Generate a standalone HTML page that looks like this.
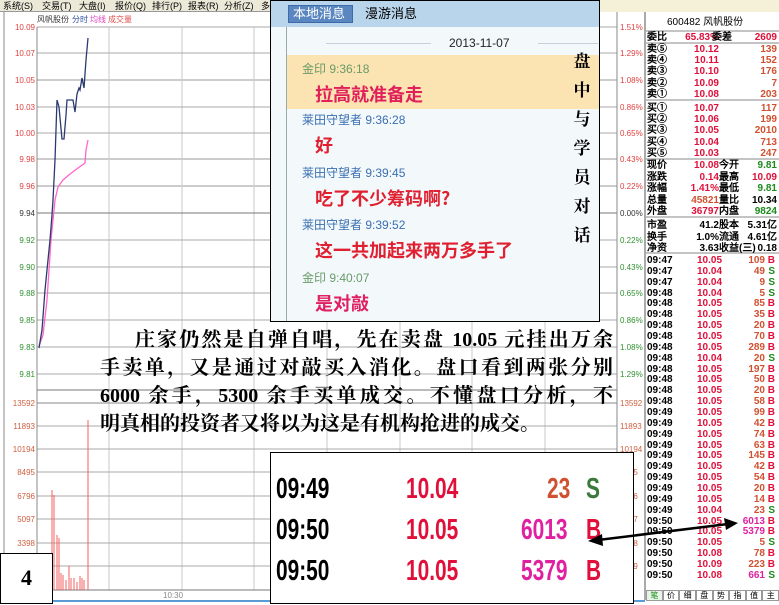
<!DOCTYPE html>
<html><head><meta charset="utf-8">
<style>
*{margin:0;padding:0;box-sizing:border-box}
body{width:779px;height:605px;overflow:hidden;background:#fff;position:relative;font-family:"Liberation Sans","WenQuanYi Zen Hei",sans-serif}
.a{position:absolute;white-space:nowrap}
.menu{left:0;top:0;width:779px;height:12px;background:#ece9d8;border-bottom:1px solid #999;font-size:9px;line-height:12px;color:#000}
.menu span{position:absolute;top:0}
.rp{font-size:10px;font-weight:bold;line-height:11px}
.r{color:#e0103a}.g{color:#1a8a1a}.k{color:#000}.m{color:#e020a0}.o{color:#d05030}
.chat{left:270px;top:0;width:330px;height:322px;border:1.5px solid #000;background:#f3f8fb;overflow:hidden}
.para{font-family:"Liberation Serif","Noto Serif CJK SC",serif;font-weight:bold;font-size:20px;color:#000;text-align:justify;text-align-last:justify;height:26px;line-height:26px}
.big{font-family:"Liberation Sans",sans-serif;font-weight:bold;font-size:29px;line-height:30px;transform:scaleX(0.72);transform-origin:left top}
</style></head><body>
<div class="a menu">
<span style="left:3px">系统(S)</span><span style="left:42px">交易(T)</span><span style="left:79px">大盘(I)</span><span style="left:115px">报价(Q)</span><span style="left:152px">排行(P)</span><span style="left:188px">报表(R)</span><span style="left:224px">分析(Z)</span><span style="left:261px">多</span>
<span style="left:600px;width:179px;height:12px;background:#f5f0d8"></span>
</div>
<svg class="a" style="left:0;top:0" width="779" height="605">
<line x1="4" y1="12" x2="4" y2="600" stroke="#888"/>
<line x1="3" y1="601" x2="645" y2="601" stroke="#5b9bd5" stroke-width="2"/>
<g stroke="#c8c8c8" stroke-width="1">
<line x1="109" y1="27" x2="109" y2="590"/><line x1="182" y1="27" x2="182" y2="590"/><line x1="254" y1="27" x2="254" y2="590"/><line x1="327" y1="27" x2="327" y2="590"/><line x1="400" y1="27" x2="400" y2="590"/><line x1="472" y1="27" x2="472" y2="590"/><line x1="545" y1="27" x2="545" y2="590"/>
</g>
<g stroke="#aaa" stroke-width="1">
<line x1="37" y1="27" x2="617" y2="27"/><line x1="37" y1="53" x2="617" y2="53"/><line x1="37" y1="80" x2="617" y2="80" stroke="#ccc" stroke-width="2"/><line x1="37" y1="107" x2="617" y2="107"/><line x1="37" y1="133" x2="617" y2="133"/><line x1="37" y1="159" x2="617" y2="159" stroke="#ccc" stroke-width="2"/><line x1="37" y1="186" x2="617" y2="186" stroke="#ccc" stroke-width="2"/><line x1="37" y1="213" x2="617" y2="213" stroke="#777"/><line x1="37" y1="240" x2="617" y2="240"/><line x1="37" y1="267" x2="617" y2="267"/><line x1="37" y1="293" x2="617" y2="293"/><line x1="37" y1="320" x2="617" y2="320"/><line x1="37" y1="347" x2="617" y2="347"/><line x1="37" y1="374" x2="617" y2="374"/>
<line x1="37" y1="390" x2="617" y2="390" stroke="#777"/>
<line x1="37" y1="403" x2="617" y2="403" stroke="#888"/><line x1="37" y1="426" x2="617" y2="426"/><line x1="37" y1="449" x2="617" y2="449"/><line x1="37" y1="472" x2="617" y2="472"/><line x1="37" y1="496" x2="617" y2="496"/><line x1="37" y1="519" x2="617" y2="519"/><line x1="37" y1="543" x2="617" y2="543"/><line x1="37" y1="566" x2="617" y2="566"/><line x1="37" y1="590" x2="617" y2="590" stroke="#777"/>
<line x1="37" y1="27" x2="37" y2="590" stroke="#888"/><line x1="617" y1="12" x2="617" y2="600" stroke="#888"/>
</g>
<g font-family="Liberation Sans" font-size="8" text-anchor="end">
<text x="35" y="30" fill="#e04040">10.09</text><text x="35" y="56" fill="#e04040">10.07</text><text x="35" y="83" fill="#e04040">10.05</text><text x="35" y="110" fill="#e04040">10.03</text><text x="35" y="136" fill="#e04040">10.00</text><text x="35" y="162" fill="#e04040">9.98</text><text x="35" y="189" fill="#e04040">9.96</text><text x="35" y="216" fill="#333">9.94</text><text x="35" y="243" fill="#309030">9.92</text><text x="35" y="270" fill="#309030">9.90</text><text x="35" y="296" fill="#309030">9.88</text><text x="35" y="323" fill="#309030">9.85</text><text x="35" y="350" fill="#309030">9.83</text><text x="35" y="377" fill="#309030">9.81</text>
<g fill="#d06040"><text x="35" y="406">13592</text><text x="35" y="429">11893</text><text x="35" y="452">10194</text><text x="35" y="475">8495</text><text x="35" y="499">6796</text><text x="35" y="522">5097</text><text x="35" y="546">3398</text></g>
</g>
<g font-family="Liberation Sans" font-size="8">
<text x="620" y="30" fill="#e04040">1.51%</text><text x="620" y="56" fill="#e04040">1.29%</text><text x="620" y="83" fill="#e04040">1.08%</text><text x="620" y="110" fill="#e04040">0.86%</text><text x="620" y="136" fill="#e04040">0.65%</text><text x="620" y="162" fill="#e04040">0.43%</text><text x="620" y="189" fill="#e04040">0.22%</text><text x="620" y="216" fill="#333">0.00%</text><text x="620" y="243" fill="#309030">0.22%</text><text x="620" y="270" fill="#309030">0.43%</text><text x="620" y="296" fill="#309030">0.65%</text><text x="620" y="323" fill="#309030">0.86%</text><text x="620" y="350" fill="#309030">1.08%</text><text x="620" y="377" fill="#309030">1.29%</text>
<g fill="#d06040"><text x="620" y="406">13592</text><text x="620" y="429">11893</text><text x="620" y="452">10194</text><text x="620" y="475">8495</text><text x="620" y="499">6796</text><text x="620" y="522">5097</text><text x="620" y="546">3398</text><text x="620" y="569">1699</text></g>
<text x="163" y="598" fill="#888">10:30</text>
<text x="37" y="22" fill="#333">风帆股份</text><text x="72" y="22" fill="#3050a0">分时</text><text x="90" y="22" fill="#e040c0">均线</text><text x="108" y="22" fill="#e05050">成交量</text>
</g>
<polyline fill="none" stroke="#ff66cc" stroke-width="1.3" points="39,346 43,335 47,300 51,240 55,200 58,187 63,180 70,174 78,168 85,163 86,150 88,140"/>
<polyline fill="none" stroke="#2a3a70" stroke-width="1.3" points="39,348 42,330 45,290 48,260 50,240 52,215 53,200 54,180 55,160 57,100 59,107 62,139 64,139 66,115 67,100 73,100 75,112 77,94 79,88 80,90 82,78 84,88 86,60 88,38"/>
<g stroke="#f06060" stroke-width="1">
<line x1="52" y1="490" x2="52" y2="590"/><line x1="54" y1="495" x2="54" y2="590"/><line x1="57" y1="535" x2="57" y2="590"/><line x1="59" y1="538" x2="59" y2="590"/><line x1="61" y1="573" x2="61" y2="590"/><line x1="63" y1="575" x2="63" y2="590"/><line x1="66" y1="580" x2="66" y2="590"/><line x1="69" y1="566" x2="69" y2="590"/><line x1="71" y1="578" x2="71" y2="590"/><line x1="74" y1="578" x2="74" y2="590"/><line x1="77" y1="582" x2="77" y2="590"/><line x1="80" y1="576" x2="80" y2="590"/><line x1="82" y1="578" x2="82" y2="590"/><line x1="84" y1="580" x2="84" y2="590"/><line x1="88" y1="420" x2="88" y2="590"/>
</g>
<line x1="645" y1="12" x2="645" y2="600" stroke="#555"/>
<g stroke="#888"><line x1="646" y1="31" x2="779" y2="31"/><line x1="646" y1="43" x2="779" y2="43"/><line x1="646" y1="100" x2="779" y2="100"/><line x1="646" y1="159" x2="779" y2="159"/><line x1="646" y1="217" x2="779" y2="217"/><line x1="646" y1="253" x2="779" y2="253"/></g>
</svg>

<div class="a rp k" style="left:667px;top:17px;font-weight:normal">600482 风帆股份</div>
<div class="a rp" style="left:647px;top:32px;width:130px">
<div style="position:relative;height:11.5px"><span class="a k" style="left:0">委比</span><span class="a r" style="right:58px">65.83%</span><span class="a k" style="left:65px">委差</span><span class="a r" style="right:0">2609</span></div>
</div>
<div class="a rp" id="book" style="left:647px;top:44px;width:130px"></div>
<div class="a rp" id="stat" style="left:647px;top:160px;width:130px"></div>
<div class="a rp" id="trd" style="left:647px;top:255px;width:130px"></div>
<div class="a" style="left:646px;top:590px;width:133px;height:11px;display:flex;font-size:8px;line-height:10px;color:#000">
<span style="flex:1;border:1px solid #999;text-align:center;color:#1a8a1a;background:#e8f4e8">笔</span><span style="flex:1;border:1px solid #999;text-align:center">价</span><span style="flex:1;border:1px solid #999;text-align:center">细</span><span style="flex:1;border:1px solid #999;text-align:center">盘</span><span style="flex:1;border:1px solid #999;text-align:center">势</span><span style="flex:1;border:1px solid #999;text-align:center">指</span><span style="flex:1;border:1px solid #999;text-align:center">值</span><span style="flex:1;border:1px solid #999;text-align:center">主</span>
</div>

<div class="a chat">
<div class="a" style="left:0;top:0;width:330px;height:26px;background:#b9d5ec"></div>
<div class="a" style="left:17px;top:4px;width:65px;height:18px;background:#5b87c0;border:1px solid #3d6aa8;color:#fff;font-size:13px;line-height:16px;padding-left:4px">本地消息</div>
<div class="a" style="left:94px;top:4px;font-size:13px;line-height:18px;color:#000">漫游消息</div>
<div class="a" style="left:15px;top:26px;width:1px;height:296px;background:#9aa"></div>
<div class="a" style="left:55px;top:42px;width:105px;height:1px;background:#ccd"></div>
<div class="a" style="left:267px;top:42px;width:60px;height:1px;background:#ccd"></div>
<div class="a" style="left:178px;top:35px;font-size:12px;color:#222">2013-11-07</div>
<div class="a" style="left:16px;top:54px;width:312px;height:54px;background:#fbe3b2"></div>
<div class="a" style="left:31px;top:59px;font-size:12px;color:#6a9a6a">金印 9:36:18</div>
<div class="a" style="left:44px;top:80px;font-size:18px;font-weight:bold;color:#e0205a;font-family:'Noto Sans CJK SC',sans-serif">拉高就准备走</div>
<div class="a" style="left:31px;top:110px;font-size:12px;color:#3a6fb0">莱田守望者 9:36:28</div>
<div class="a" style="left:44px;top:131px;font-size:18px;font-weight:bold;color:#e02030;font-family:'Noto Sans CJK SC',sans-serif">好</div>
<div class="a" style="left:31px;top:163px;font-size:12px;color:#3a6fb0">莱田守望者 9:39:45</div>
<div class="a" style="left:44px;top:184px;font-size:18px;font-weight:bold;color:#e02030;font-family:'Noto Sans CJK SC',sans-serif">吃了不少筹码啊?</div>
<div class="a" style="left:31px;top:215px;font-size:12px;color:#3a6fb0">莱田守望者 9:39:52</div>
<div class="a" style="left:44px;top:236px;font-size:18px;font-weight:bold;color:#e02030;font-family:'Noto Sans CJK SC',sans-serif">这一共加起来两万多手了</div>
<div class="a" style="left:31px;top:268px;font-size:12px;color:#6a9a6a">金印 9:40:07</div>
<div class="a" style="left:44px;top:289px;font-size:18px;font-weight:bold;color:#e02060;font-family:'Noto Sans CJK SC',sans-serif">是对敲</div>
<div class="a" style="left:300px;top:44px;width:22px;font-size:17px;line-height:29px;font-weight:bold;color:#000;font-family:'Noto Serif CJK SC',serif;white-space:normal;text-align:center">盘中与学员对话</div>
</div>

<div class="a para" style="left:135px;top:327px;width:478px">庄家仍然是自弹自唱，先在卖盘 10.05 元挂出万余</div>
<div class="a para" style="left:100px;top:355px;width:513px">手卖单，又是通过对敲买入消化。盘口看到两张分别</div>
<div class="a para" style="left:100px;top:383px;width:513px">6000 余手，5300 余手买单成交。不懂盘口分析，不</div>
<div class="a para" style="left:100px;top:411px;width:485px;text-align-last:left">明真相的投资者又将以为这是有机构抢进的成交。</div>

<div class="a" style="left:270px;top:452px;width:364px;height:152px;background:#fff;border:1.5px solid #000">
<div class="a big k" style="left:5px;top:21px">09:49</div><div class="a big r" style="left:135px;top:21px">10.04</div><div class="a big o" style="left:276px;top:21px">23</div><div class="a big" style="left:315px;top:21px;color:#3a7a3a">S</div>
<div class="a big k" style="left:5px;top:62px">09:50</div><div class="a big r" style="left:135px;top:62px">10.05</div><div class="a big m" style="left:250px;top:62px">6013</div><div class="a big r" style="left:315px;top:62px">B</div>
<div class="a big k" style="left:5px;top:103px">09:50</div><div class="a big r" style="left:135px;top:103px">10.05</div><div class="a big m" style="left:250px;top:103px">5379</div><div class="a big r" style="left:315px;top:103px">B</div>
</div>

<div class="a" style="left:0;top:553px;width:53px;height:51px;background:#fff;border:1.5px solid #000;font-family:'Liberation Serif',serif;font-weight:bold;font-size:22px;line-height:48px;text-align:center">4</div>

<svg class="a" style="left:0;top:0;pointer-events:none" width="779" height="605">
<line x1="598" y1="540" x2="728" y2="524" stroke="#000" stroke-width="2.5"/>
<polygon points="588,541 602,534 603,546" fill="#000"/>
<polygon points="738,523 724,518 726,530" fill="#000"/>
</svg>

<script>
function row(l,p,pc,l2,v,vc,hh){return '<div style="position:relative;height:'+hh+'px"><span class="a k" style="left:0">'+l+'</span><span class="a '+pc+'" style="right:58px">'+p+'</span>'+(l2?'<span class="a k" style="left:72px">'+l2+'</span>':'')+'<span class="a '+vc+'" style="right:0">'+v+'</span></div>';}
var b=[["卖⑤","10.12","139"],["卖④","10.11","152"],["卖③","10.10","176"],["卖②","10.09","7"],["卖①","10.08","203"],["买①","10.07","117"],["买②","10.06","199"],["买③","10.05","2010"],["买④","10.04","713"],["买⑤","10.03","247"]];
var h="";b.forEach(function(x,i){h+=row(x[0],x[1],"r","",x[2],"o",11.2);if(i==4)h+='<div style="height:3px"></div>';});
document.getElementById("book").innerHTML=h;
var s=[["现价","10.08","r","今开","9.81","g"],["涨跌","0.14","r","最高","10.09","r"],["涨幅","1.41%","r","最低","9.81","g"],["总量","45821","o","量比","10.34","k"],["外盘","36797","r","内盘","9824","g"],["市盈","41.2","k","股本","5.31亿","k"],["换手","1.0%","k","流通","4.61亿","k"],["净资","3.63","k","收益(三)","0.18","k"]];
h="";s.forEach(function(x,i){h+=row(x[0],x[1],x[2],x[3],x[4],x[5],11.6);if(i==4)h+='<div style="height:2px"></div>';});
document.getElementById("stat").innerHTML=h;
var t=[["09:47","10.05","109","B"],["09:47","10.04","49","S"],["09:47","10.04","9","S"],["09:48","10.04","5","S"],["09:48","10.05","85","B"],["09:48","10.05","35","B"],["09:48","10.05","20","B"],["09:48","10.05","70","B"],["09:48","10.05","289","B"],["09:48","10.04","20","S"],["09:48","10.05","197","B"],["09:48","10.05","50","B"],["09:48","10.05","20","B"],["09:48","10.05","58","B"],["09:49","10.05","99","B"],["09:49","10.05","42","B"],["09:49","10.05","74","B"],["09:49","10.05","63","B"],["09:49","10.05","145","B"],["09:49","10.05","42","B"],["09:49","10.05","54","B"],["09:49","10.05","20","B"],["09:49","10.05","14","B"],["09:49","10.04","23","S"],["09:50","10.05","6013","B"],["09:50","10.05","5379","B"],["09:50","10.05","5","S"],["09:50","10.08","78","B"],["09:50","10.09","223","B"],["09:50","10.08","661","S"]];
h="";t.forEach(function(x){var vc=(+x[2]>500)?"m":"o";h+='<div style="position:relative;height:10.86px"><span class="a k" style="left:0">'+x[0]+'</span><span class="a r" style="left:50px">'+x[1]+'</span><span class="a '+vc+'" style="right:12px">'+x[2]+'</span><span class="a '+(x[3]=="B"?"r":"g")+'" style="right:2px">'+x[3]+'</span></div>';});
document.getElementById("trd").innerHTML=h;
</script>
</body></html>
